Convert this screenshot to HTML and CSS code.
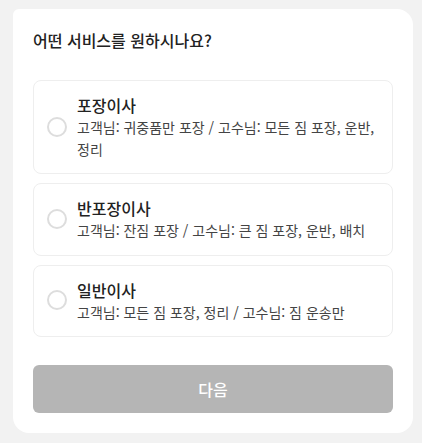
FILE: index.html
```html
<!DOCTYPE html>
<html lang="ko">
<head>
  <meta charset="UTF-8">
  <title>이사 서비스 선택</title>
  <link rel="stylesheet" href="styles.css">
</head>
<body>
  <div class="card">
    <h2 class="question">어떤 서비스를 원하시나요?</h2>

    <div class="options">
      <label class="option">
        <span class="radio"></span>
        <span class="text">
          <span class="name">포장이사</span>
          <span class="desc">고객님: 귀중품만 포장 / 고수님: 모든 짐 포장, 운반, 정리</span>
        </span>
      </label>
      <label class="option">
        <span class="radio"></span>
        <span class="text">
          <span class="name">반포장이사</span>
          <span class="desc">고객님: 잔짐 포장 / 고수님: 큰 짐 포장, 운반, 배치</span>
        </span>
      </label>
      <label class="option">
        <span class="radio"></span>
        <span class="text">
          <span class="name">일반이사</span>
          <span class="desc">고객님: 모든 짐 포장, 정리 / 고수님: 짐 운송만</span>
        </span>
      </label>
    </div>

    <button class="next" disabled>다음</button>
  </div>
</body>
</html>
```

FILE: styles.css
```css
body {
  margin: 0;
  background: #f2f2f2;
  font-family: "Noto Sans CJK KR", "Noto Sans", sans-serif;
  padding: 9px 9px 10px 13px;
}

.card {
  background: white;
  width: 400px;
  box-sizing: border-box;
  padding: 18px 20px 20px 20px;
  border-radius: 6px 16px 16px 16px;
}

.question {
  margin: 0;
  font-size: 16px;
  font-weight: 500;
  line-height: 26px;
  color: #222;
}

.options {
  margin-top: 27px;
  display: flex;
  flex-direction: column;
  gap: 9px;
}

.option {
  display: flex;
  align-items: center;
  gap: 10px;
  padding: 12px 16px 13px 13px;
  border: 1px solid #eee;
  border-radius: 8px;
}

.radio {
  flex: none;
  width: 16px;
  height: 16px;
  border: 2px solid #ddd;
  border-radius: 50%;
}

.text {
  display: flex;
  flex-direction: column;
}

.name {
  font-size: 16px;
  font-weight: 500;
  line-height: 24px;
  color: #222;
}

.desc {
  font-size: 14px;
  line-height: 21.5px;
  color: #444;
  word-break: keep-all;
}

.next {
  margin-top: 28px;
  width: 100%;
  height: 48px;
  border: none;
  border-radius: 6px;
  background: #b5b5b5;
  color: white;
  font-family: inherit;
  font-size: 16px;
  font-weight: 500;
}
```
